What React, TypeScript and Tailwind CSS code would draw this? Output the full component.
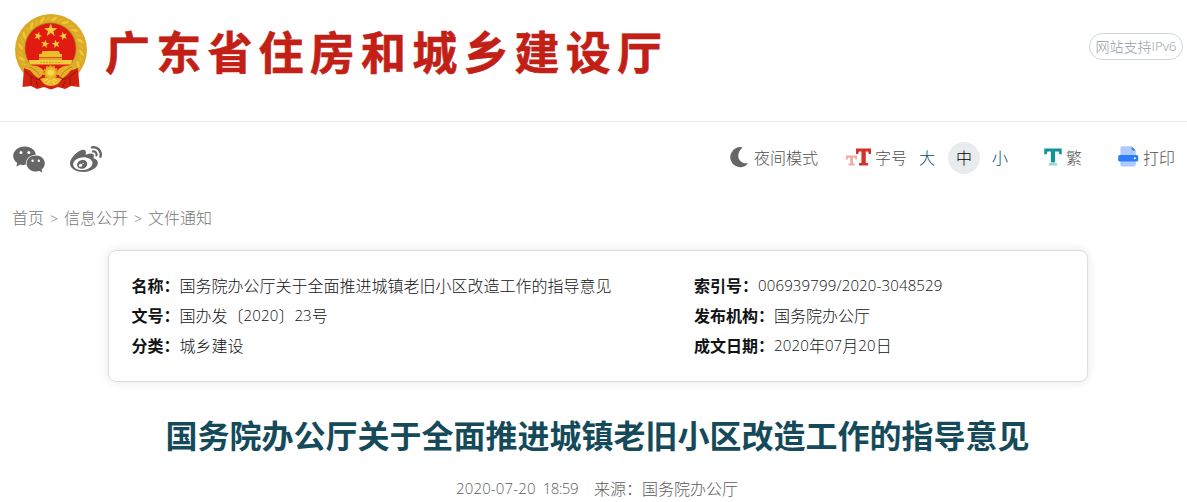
import React from "react";
import { FaWeibo } from "react-icons/fa";

function starPoints(cx: number, cy: number, r: number, turn = 0): string {
  return Array.from({ length: 10 }, (_, i) => {
    const a = (i * Math.PI) / 5 - Math.PI / 2 + turn;
    const d = i % 2 ? r * 0.4 : r;
    return `${(cx + d * Math.cos(a)).toFixed(2)},${(cy + d * Math.sin(a)).toFixed(2)}`;
  }).join(" ");
}

function Emblem() {
  const grains = Array.from({ length: 26 }, (_, i) => (130 + (i * 280) / 25) * (Math.PI / 180));
  return (
    <svg width="74" height="78" viewBox="0 0 74 78" className="shrink-0">
      <ellipse cx="37" cy="37" rx="36" ry="36" fill="#dcaa28" />
      {grains.map((a, i) => {
        const x = 37 + 30.5 * Math.cos(a);
        const y = 37 + 31 * Math.sin(a);
        return (
          <ellipse
            key={i}
            cx={x}
            cy={y}
            rx="4.2"
            ry="1.8"
            fill={i % 2 ? "#efc636" : "#e3b32c"}
            stroke="#d3a224"
            strokeWidth=".5"
            transform={`rotate(${(a * 180) / Math.PI + 50} ${x} ${y})`}
          />
        );
      })}
      <circle cx="36.5" cy="35.5" r="26" fill="#b5851a" />
      <circle cx="36.5" cy="35.5" r="25.2" fill="#df1b12" />
      <path d="M10 55 Q16 58 22 58 L30 62 H44 L52 58 Q58 58 64 55 L65.5 74 L57 73 L51 76 L44 74 L37 76.5 L30 74 L23 76 L17 73 L8.5 74 Z" fill="#d3200f" />
      <g fill="#f1cb3d">
        <polygon points={starPoints(36.7, 17.3, 7)} />
        <polygon points={starPoints(24, 23, 4.4, 0.3)} />
        <polygon points={starPoints(49.5, 23, 4.4, -0.3)} />
        <polygon points={starPoints(31, 31, 4.4, 0.2)} />
        <polygon points={starPoints(42, 31, 4.4, -0.2)} />
      </g>
      <path d="M28.5 38 H45 L46 41 H48 V44 H25 V41 H27.5 Z" fill="#f0bd2b" />
      <path d="M25 44.6 H48 V47.5 H25 Z" fill="#e2a42a" />
      <path d="M14.5 47 H58.5 L57 51.6 H16 Z" fill="#f3cc3e" />
      <path d="M26 49.4 H48" stroke="#d09b20" strokeWidth="1" strokeDasharray="2 1" />
      <path d="M13 53 Q24 51 30 58 Q28 65 24 65 Q19 62 13 53 Z M60 53 Q49 51 43 58 Q45 65 49 65 Q54 62 60 53 Z" fill="#e5b02a" />
      <path d="M15 54 Q22 56 26 63 M58 54 Q51 56 47 63" fill="none" stroke="#b07a14" strokeWidth=".8" />
      <path d="M11 58 Q19 67 27 67 M63 58 Q54 67 46 67 M17 64 V72 M56 64 V72 M22 68 L24 74 M51 68 L49 74" fill="none" stroke="#8e1a0c" strokeWidth="1" />
      <circle cx="36.7" cy="59.5" r="6.2" fill="#edb727" stroke="#dba428" strokeWidth="2.2" strokeDasharray="2 1.4" />
      <ellipse cx="36.7" cy="59.5" rx="3.4" ry="3" fill="#f7d74e" />
      <path d="M26 66 Q31 63.5 36.7 65 Q43 63.5 48 66 L44 71 Q36.7 75 30 71 Z" fill="#edb727" />
      <path d="M30 68 L34 66 M33 71 L36 67 M43 68 L39 66 M41 71 L38 67" stroke="#f9e070" strokeWidth=".9" />
    </svg>
  );
}

function WechatIcon() {
  return (
    <svg width="33" height="28" viewBox="0 0 33 28" className="mt-[5px]">
      <path d="M12 .6 C18 .6 22.4 4.2 22.8 8.8 C16.6 9.2 12.4 13.2 12.8 18.8 C11.2 19 8.8 19 7.2 18.4 L3.4 20.8 L4.2 17 C1.6 15.2 .2 12.8 .2 10 C.2 4.8 5.4 .6 12 .6 Z" fill="#666" />
      <path d="M22.8 9.6 C28 9.6 31.8 13 31.8 17.4 C31.8 20 30.4 22.2 28.6 23.6 L29.4 26.6 L26.4 25 C19.8 26.8 13.6 23.2 13.6 17.4 C13.6 13 17.6 9.6 22.8 9.6 Z" fill="#666" />
      <circle cx="8" cy="6.6" r="1.5" fill="#fff" />
      <circle cx="15.8" cy="6.6" r="1.5" fill="#fff" />
      <circle cx="19.6" cy="14.8" r="1.2" fill="#fff" />
      <circle cx="25.8" cy="14.8" r="1.2" fill="#fff" />
    </svg>
  );
}

function MoonIcon() {
  return (
    <svg width="19" height="21" viewBox="0 0 19 21" className="-mt-px mr-[5px]">
      <path d="M12.6 .4 A10 10 0 1 0 18.2 16.2 C8.6 17.6 4.4 7.4 12.6 .4 Z" fill="#666" />
    </svg>
  );
}

function FontSizeIcon() {
  return (
    <svg width="26" height="18" viewBox="0 0 26 18" className="-mt-[2px] mr-[3px]">
      <path d="M0 7.5 H11 V11.5 H9.2 V9.8 H7 V15.5 H8.7 V17.5 H2.5 V15.5 H4.2 V9.8 H1.8 V11.5 H0 Z" fill="#f1aaa7" />
      <path d="M10 .5 H25 V6 H22.8 L22 3.4 H19.8 V15 H22 V17.5 H13 V15 H15.4 V3.4 H13 L12.2 6 H10 Z" fill="#d5302b" />
    </svg>
  );
}

function GlyphIcon() {
  return (
    <svg width="18" height="18" viewBox="0 0 18 18" className="-mt-[2px] mr-1">
      <path d="M.3 .5 H17.7 V6.2 H15.3 L14.6 3.6 H11.1 V14.8 H6.9 V3.6 H3.4 L2.7 6.2 H.3 Z" fill="#12939a" />
      <path d="M6.9 14 H11.1 V15.2 H13.2 V17.4 H4.8 V15.2 H6.9 Z" fill="#9dd3d6" />
    </svg>
  );
}

function PrinterIcon() {
  return (
    <svg width="21" height="21" viewBox="0 0 21 21" className="-mt-[2px] mr-1">
      <path d="M2.4 10 V2 Q2.4 .2 4.2 .2 H13.2 L17.8 4.8 V10 Z" fill="#aecbff" />
      <path d="M13.6 .6 L17.8 4.6 H15.2 Q13.6 4.4 13.6 3 Z" fill="#2b7cff" />
      <path d="M2.4 14 H17.8 V18.8 Q17.8 20.6 16 20.6 H4.2 Q2.4 20.6 2.4 18.8 Z" fill="#aecbff" />
      <rect x=".2" y="9" width="20" height="6.6" rx="1.6" fill="#2b7cff" />
      <circle cx="16.8" cy="12.3" r="1" fill="#fff" />
    </svg>
  );
}

function Field({ label, children }: { label: string; children: React.ReactNode }) {
  return (
    <div className="flex h-[30px] items-center whitespace-nowrap">
      <b className="font-bold">{label}</b>
      {children}
    </div>
  );
}

function Num({ children }: { children: string }) {
  return <span className="font-['Open_Sans'] text-[15px] font-light tracking-[0.15px]">{children}</span>;
}

export default function App() {
  return (
    <div className="h-[502px] w-[1187px] overflow-hidden bg-white font-['Noto_Sans_CJK_SC',sans-serif] text-[16px] leading-[24px] font-light text-[#101214]">
      <header className="flex h-[122px] items-start border-b border-[#e9eaec] pl-[14px]">
        <div className="mt-[13px]">
          <Emblem />
        </div>
        <h1 className="mt-[19px] ml-[17px] text-[45px] leading-[64px] font-bold tracking-[6.2px] whitespace-nowrap text-[#c21f17] [-webkit-text-stroke:0.6px_#c21f17]">
          广东省住房和城乡建设厅
        </h1>
        <div className="mt-[33px] mr-[4px] ml-auto flex h-[27px] w-[94px] items-center justify-center rounded-full border border-[#ced4da] pb-px text-[14px] whitespace-nowrap text-[#919ca8]">
          网站支持<span className="font-['Open_Sans'] text-[13.5px] tracking-[-0.1px]">IPv6</span>
        </div>
      </header>

      <div className="flex h-[71px] items-center pr-[12px] pl-[13px] whitespace-nowrap text-[#505050]">
        <WechatIcon />
        <FaWeibo className="mt-[5px] ml-[24px] size-[32px] text-[#666]" />
        <div className="ml-auto flex items-center">
          <MoonIcon />
          <span className="-mt-px">夜间模式</span>
        </div>
        <div className="ml-[28px] flex items-center">
          <FontSizeIcon />
          <span className="-mt-px">字号</span>
          <span className="-mt-px ml-[12px] text-[#0a4b6e]">大</span>
          <span className="mt-px ml-[13px] flex size-8 items-center justify-center rounded-full bg-[#e9ecef] pb-[2px] text-black">中</span>
          <span className="-mt-px ml-[12px] text-[#0a4b6e]">小</span>
        </div>
        <div className="ml-[36px] flex items-center">
          <GlyphIcon />
          <span className="-mt-px">繁</span>
        </div>
        <div className="ml-[36px] flex items-center">
          <PrinterIcon />
          <span className="-mt-px">打印</span>
        </div>
      </div>

      <nav className="mt-[12px] flex h-[24px] items-center pl-[12px] whitespace-nowrap text-[#777]">
        <span>首页</span>
        <span className="w-[20px] pt-[3px] text-center font-['Open_Sans'] text-[14px]">&gt;</span>
        <span>信息公开</span>
        <span className="w-[20px] pt-[3px] text-center font-['Open_Sans'] text-[14px]">&gt;</span>
        <span>文件通知</span>
      </nav>

      <section className="mt-[21px] ml-[108px] flex h-[132px] w-[980px] rounded-[8px] border border-[#dcdddf] pt-[19px] pl-[22.5px] shadow-[0_0_10px_rgba(0,0,0,0.1)]">
        <div className="w-[562.5px]">
          <Field label="名称：">国务院办公厅关于全面推进城镇老旧小区改造工作的指导意见</Field>
          <Field label="文号：">
            国办发〔<Num>2020</Num>〕<Num>23</Num>号
          </Field>
          <Field label="分类：">城乡建设</Field>
        </div>
        <div>
          <Field label="索引号：">
            <Num>006939799/2020-3048529</Num>
          </Field>
          <Field label="发布机构：">国务院办公厅</Field>
          <Field label="成文日期：">
            <Num>2020</Num>年<Num>07</Num>月<Num>20</Num>日
          </Field>
        </div>
      </section>

      <h2 className="mt-[28px] ml-[165.5px] text-[32px] leading-[48px] font-bold whitespace-nowrap text-[#144a5a]">
        国务院办公厅关于全面推进城镇老旧小区改造工作的指导意见
      </h2>
      <div className="mt-[18px] ml-[456px] flex h-[24px] items-center gap-[7px] whitespace-nowrap text-[#5c5c5c]">
        <Num>2020-07-20</Num>
        <span className="font-['Open_Sans'] text-[15px] font-light tracking-[-0.5px]">18:59</span>
        <span className="ml-[9px]">来源：国务院办公厅</span>
      </div>
    </div>
  );
}
